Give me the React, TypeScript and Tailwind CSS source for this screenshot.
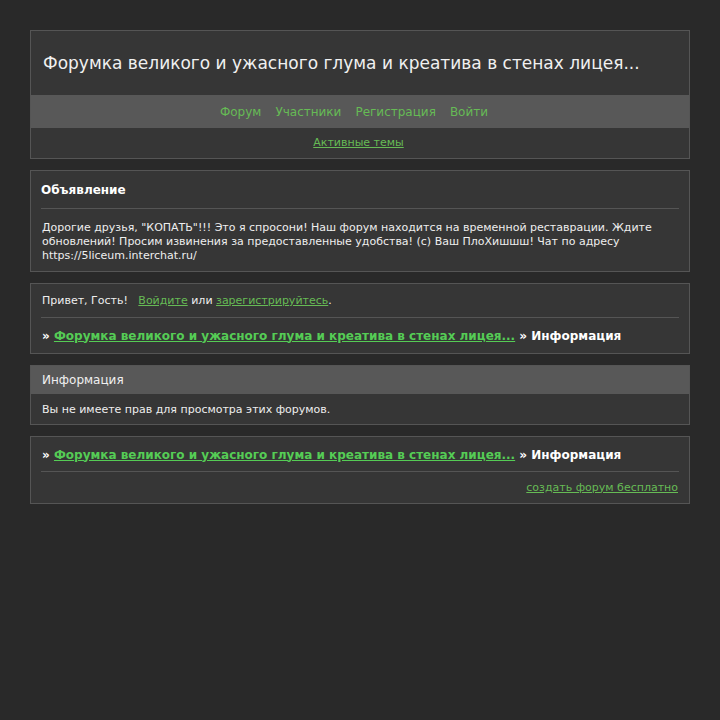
export default function App() {
  const font = { fontFamily: '"DejaVu Sans", Verdana, sans-serif' };
  return (
    <div className="min-h-[720px] bg-[#292929] px-[30px] pt-[30px] pb-10 text-[#eeeeee]" style={font}>
      <div className="border border-[#555555] bg-[#363636]">
        <div className="h-[64px] flex items-center px-3">
          <h1 className="text-[17px] text-[#f0f0f0] pt-[1px]">Форумка великого и ужасного глума и креатива в стенах лицея...</h1>
        </div>
        <div className="h-[33px] bg-[#585858] flex items-center justify-center gap-[14px] pr-[12px] text-[12px] text-[#66bb55]">
          <a>Форум</a>
          <a>Участники</a>
          <a>Регистрация</a>
          <a>Войти</a>
        </div>
        <div className="h-[30px] flex items-center justify-center pr-[3px] text-[11px]">
          <a className="underline text-[#66bb55]">Активные темы</a>
        </div>
      </div>

      <div className="mt-[11px] border border-[#555555] bg-[#363636] px-[10px] pt-[11px] pb-[8px]">
        <div className="text-[12px] font-bold text-white pb-[9px] leading-[17px]">Объявление</div>
        <div className="border-t border-[#555555]"></div>
        <div className="pt-[12px] px-[1px] text-[11px] leading-[14px] text-[#eeeeee]">
          Дорогие друзья, "КОПАТЬ"!!! Это я спросони! Наш форум находится на временной реставрации. Ждите обновлений! Просим извинения за предоставленные удобства! (с) Ваш ПлоХишшш! Чат по адресу https://5liceum.interchat.ru/
        </div>
      </div>

      <div className="mt-[11px] border border-[#555555] bg-[#363636] px-[10px] pt-[9px] pb-[9px]">
        <div className="text-[11px] px-[1px] text-[#eeeeee]">
          Привет, Гость!&nbsp;&nbsp; <a className="underline text-[#66bb55]">Войдите</a> или <a className="underline text-[#66bb55]">зарегистрируйтесь</a>.
        </div>
        <div className="border-t border-[#555555] mt-[7px]"></div>
        <div className="pt-[10px] px-[1px] text-[12px] font-bold text-white leading-[16px]">
          » <a className="underline text-[#55cc55]">Форумка великого и ужасного глума и креатива в стенах лицея...</a> » Информация
        </div>
      </div>

      <div className="mt-[11px] border border-[#555555] bg-[#363636]">
        <div className="h-[28px] bg-[#585858] flex items-center px-[11px] pt-[1px] text-[12px] text-[#f0f0f0]">Информация</div>
        <div className="h-[30px] flex items-center px-[11px] pt-[3px] text-[11px] text-[#eeeeee]">Вы не имеете прав для просмотра этих форумов.</div>
      </div>

      <div className="mt-[11px] border border-[#555555] bg-[#363636] px-[10px] pt-[10px] pb-[7px]">
        <div className="px-[1px] text-[12px] font-bold text-white leading-[16px]">
          » <a className="underline text-[#55cc55]">Форумка великого и ужасного глума и креатива в стенах лицея...</a> » Информация
        </div>
        <div className="border-t border-[#555555] mt-[8px]"></div>
        <div className="pt-[8px] pr-[1px] text-right text-[11px]">
          <a className="underline text-[#66bb55]">создать форум бесплатно</a>
        </div>
      </div>
    </div>
  );
}
